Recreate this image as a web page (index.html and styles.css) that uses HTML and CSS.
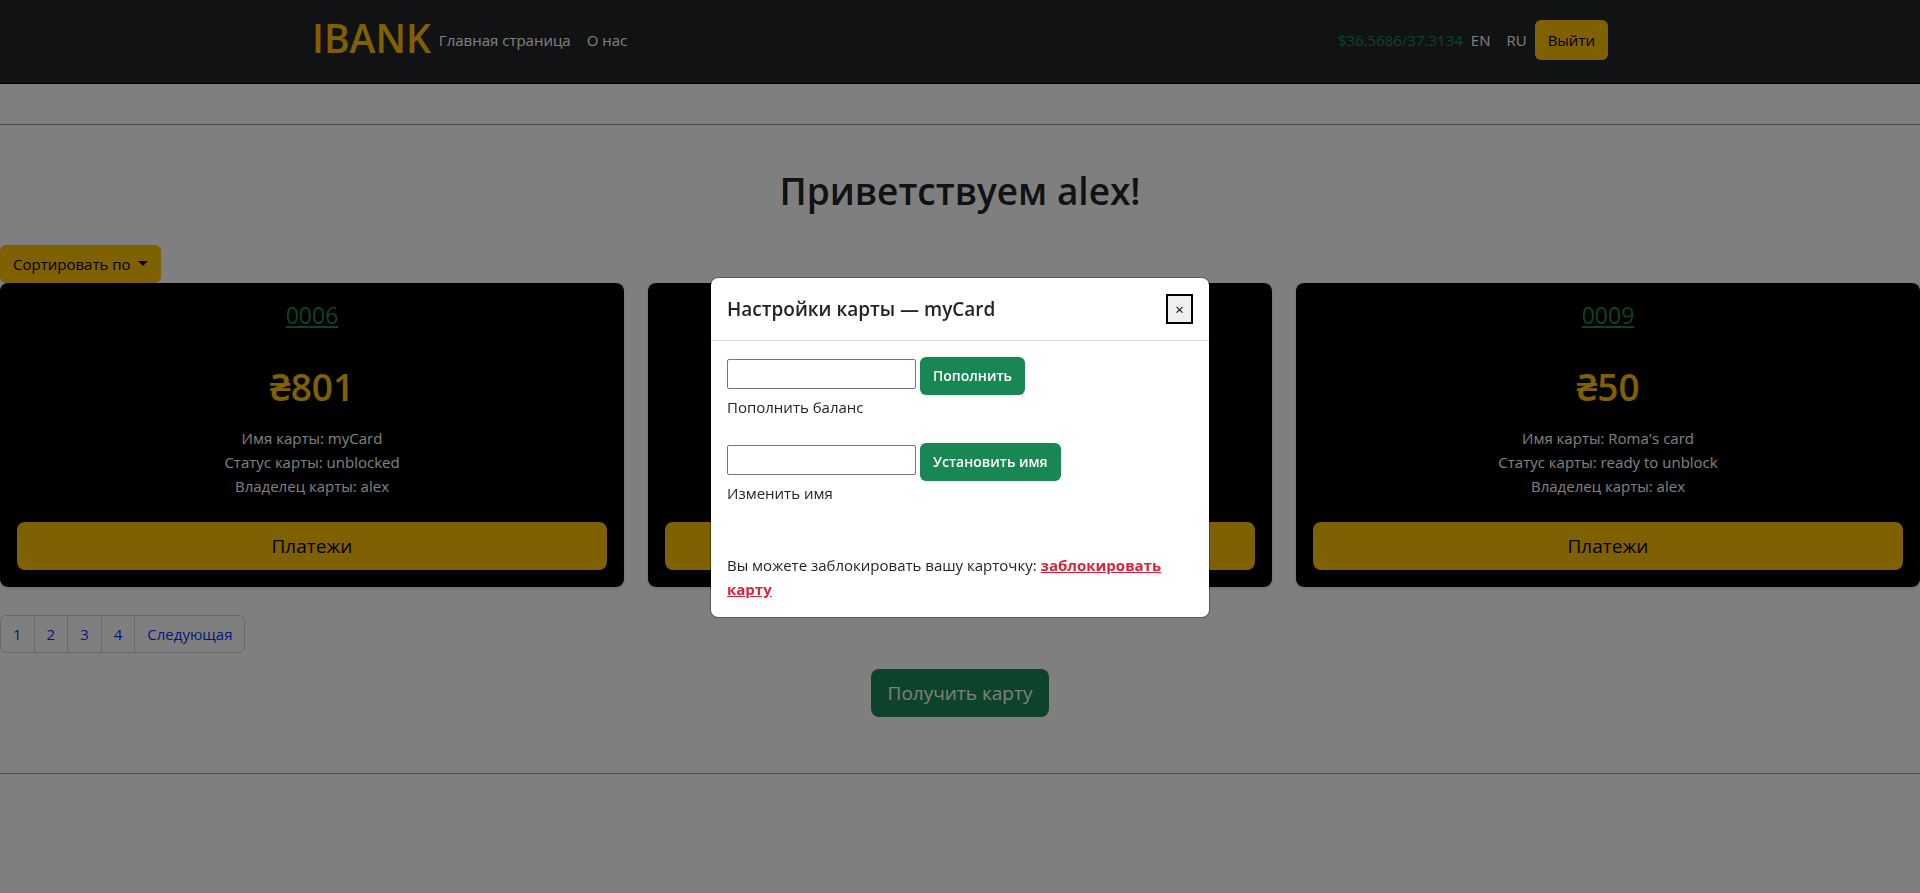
FILE: index.html
```html
<!DOCTYPE html>
<html lang="ru">
<head>
<meta charset="utf-8">
<title>IBANK</title>
<link rel="stylesheet" href="styles.css">
</head>
<body>
<header class="navbar">
  <div class="navbar-inner">
    <a class="brand" href="#">IBANK</a>
    <nav class="nav">
      <a class="nav-link" href="#">Главная страница</a>
      <a class="nav-link" href="#">О нас</a>
    </nav>
    <div class="nav-right">
      <span class="rate">$36.5686/37.3134</span>
      <a class="nav-link" href="#">EN</a>
      <a class="nav-link" href="#">RU</a>
      <button class="btn btn-warning btn-exit" type="button">Выйти</button>
    </div>
  </div>
</header>
<main class="page">
  <hr class="rule">
  <h1 class="welcome">Приветствуем alex!</h1>
  <button class="btn btn-warning btn-sort" type="button">Сортировать по <span class="caret"></span></button>
  <section class="cards">
    <article class="card">
      <a class="card-number" href="#">0006</a>
      <h2 class="card-balance">₴801</h2>
      <ul class="card-info">
        <li>Имя карты: myCard</li>
        <li>Статус карты: unblocked</li>
        <li>Владелец карты: alex</li>
      </ul>
      <button class="btn btn-warning btn-lg" type="button">Платежи</button>
    </article>
    <article class="card">
      <div class="card-fill"></div>
      <button class="btn btn-warning btn-lg" type="button" aria-label="Платежи"></button>
    </article>
    <article class="card">
      <a class="card-number" href="#">0009</a>
      <h2 class="card-balance">₴50</h2>
      <ul class="card-info">
        <li>Имя карты: Roma's card</li>
        <li>Статус карты: ready to unblock</li>
        <li>Владелец карты: alex</li>
      </ul>
      <button class="btn btn-warning btn-lg" type="button">Платежи</button>
    </article>
  </section>
  <nav class="pagination">
    <a class="page-link" href="#">1</a>
    <a class="page-link" href="#">2</a>
    <a class="page-link" href="#">3</a>
    <a class="page-link" href="#">4</a>
    <a class="page-link" href="#">Следующая</a>
  </nav>
  <div class="get-card">
    <button class="btn btn-success btn-lg" type="button">Получить карту</button>
  </div>
  <hr class="rule rule-bottom">
</main>
<div class="backdrop">
  <div class="modal" role="dialog" aria-labelledby="modal-title">
    <div class="modal-header">
      <h5 class="modal-title" id="modal-title">Настройки карты — myCard</h5>
      <button class="modal-close" type="button" aria-label="Закрыть">×</button>
    </div>
    <div class="modal-body">
      <form class="field">
        <div class="field-row">
          <input class="field-input" id="amount" type="text">
          <button class="btn btn-success btn-strong" type="button">Пополнить</button>
        </div>
        <label class="field-label" for="amount">Пополнить баланс</label>
      </form>
      <form class="field">
        <div class="field-row">
          <input class="field-input" id="name" type="text">
          <button class="btn btn-success btn-strong" type="button">Установить имя</button>
        </div>
        <label class="field-label" for="name">Изменить имя</label>
      </form>
      <p class="block-note">Вы можете заблокировать вашу карточку: <a class="block-link" href="#">заблокировать карту</a></p>
    </div>
  </div>
</div>
</body>
</html>
```

FILE: styles.css
```css
* {
  box-sizing: border-box;
}

body {
  margin: 0;
  font-family: "Open Sans", "Noto Sans", sans-serif;
  font-size: 15px;
  line-height: 24px;
  color: #212529;
  background: #fff;
}

h1, h2, h5, p, ul {
  margin: 0;
  padding: 0;
}

.navbar {
  background: #212529;
  border-bottom: 1px solid #000;
  padding: 10px 0 13px;
}

.navbar-inner {
  display: flex;
  align-items: center;
  width: 100%;
  max-width: 1320px;
  min-height: 60px;
  margin: 0 auto;
  padding: 0 12px;
}

.brand {
  padding-bottom: 4px;
  color: #ffc107;
  font-size: 39px;
  font-weight: 600;
  line-height: 56px;
  text-decoration: none;
}

.nav, .nav-right {
  display: flex;
  align-items: center;
}

.nav-right {
  margin-left: auto;
}

.nav-link {
  padding: 8px;
  color: #fff;
  text-decoration: none;
}

.rate {
  color: #198754;
}

.btn {
  padding: 6px 12px;
  border: 1px solid transparent;
  border-radius: 6px;
  font: inherit;
  cursor: pointer;
}

.btn-warning {
  color: #000;
  background: #ffc107;
}

.btn-success {
  color: #fff;
  background: #198754;
}

.btn-lg {
  min-height: 48px;
  padding: 8px 16px;
  border-radius: 8px;
  font-size: 19px;
  line-height: 30px;
}

.btn-exit {
  padding: 7px 12px;
}

.btn-strong {
  font-size: 14px;
  font-weight: 600;
}

.page {
  padding-top: 40px;
}

.rule {
  height: 1px;
  margin: 0;
  border: 0;
  background: #909294;
}

.rule-bottom {
  margin-top: 56px;
}

.welcome {
  padding: 42px 0 30px;
  font-size: 37px;
  font-weight: 600;
  line-height: 48px;
  text-align: center;
}

.btn-sort {
  display: block;
}

.caret {
  display: inline-block;
  margin-left: 4px;
  vertical-align: 4px;
  border-top: 5px solid;
  border-right: 5px solid transparent;
  border-left: 5px solid transparent;
}

.cards {
  display: grid;
  grid-template-columns: repeat(3, 1fr);
  gap: 24px;
}

.card {
  display: flex;
  flex-direction: column;
  align-items: center;
  padding: 16px 17px 17px;
  border-radius: 8px;
  color: #fff;
  background: #000;
  box-shadow: 0 2px 4px rgba(0, 0, 0, 0.1);
}

.card .btn-lg {
  width: 100%;
}

.card-fill {
  flex: 1;
}

.card-number {
  color: #198754;
  font-size: 23px;
  line-height: 32px;
}

.card-balance {
  margin: 32px 0 15px;
  color: #ffc107;
  font-size: 37px;
  font-weight: 600;
  line-height: 48px;
}

.card-info {
  margin: 0 0 24px;
  list-style: none;
  text-align: center;
}

.pagination {
  display: flex;
  width: fit-content;
  margin: 28px 0 16px;
  border: 1px solid #ced2d8;
  border-radius: 6px;
}

.page-link {
  padding: 6px 12px;
  color: #0d30fd;
  text-decoration: none;
}

.page-link + .page-link {
  border-left: 1px solid #ced2d8;
}

.get-card {
  text-align: center;
}

.backdrop {
  position: fixed;
  inset: 0;
  display: flex;
  align-items: center;
  justify-content: center;
  padding-top: 2px;
  background: rgba(0, 0, 0, 0.5);
}

.modal {
  width: 500px;
  border: 1px solid rgba(0, 0, 0, 0.3);
  border-radius: 8px;
  background: #fff;
  background-clip: padding-box;
}

.modal-header {
  display: flex;
  align-items: center;
  justify-content: space-between;
  padding: 16px;
  border-bottom: 1px solid #dee2e6;
}

.modal-title {
  font-size: 19px;
  font-weight: 600;
  line-height: 30px;
}

.modal-close {
  width: 27px;
  height: 30px;
  padding: 0;
  border: 2px solid #000;
  color: #000;
  background: #efefef;
  font: inherit;
}

.modal-body {
  padding: 16px;
}

.field {
  margin-bottom: 24px;
}

.field-row {
  display: flex;
  align-items: flex-start;
  gap: 4px;
}

.field-input {
  width: 189px;
  height: 30px;
  margin: 2px 0 0;
  border: 1px solid #767676;
  border-radius: 2px;
  font: inherit;
}

.field-label {
  display: block;
}

.block-note {
  padding-top: 24px;
}

.block-link {
  color: #dc2238;
  font-weight: 700;
}
```
